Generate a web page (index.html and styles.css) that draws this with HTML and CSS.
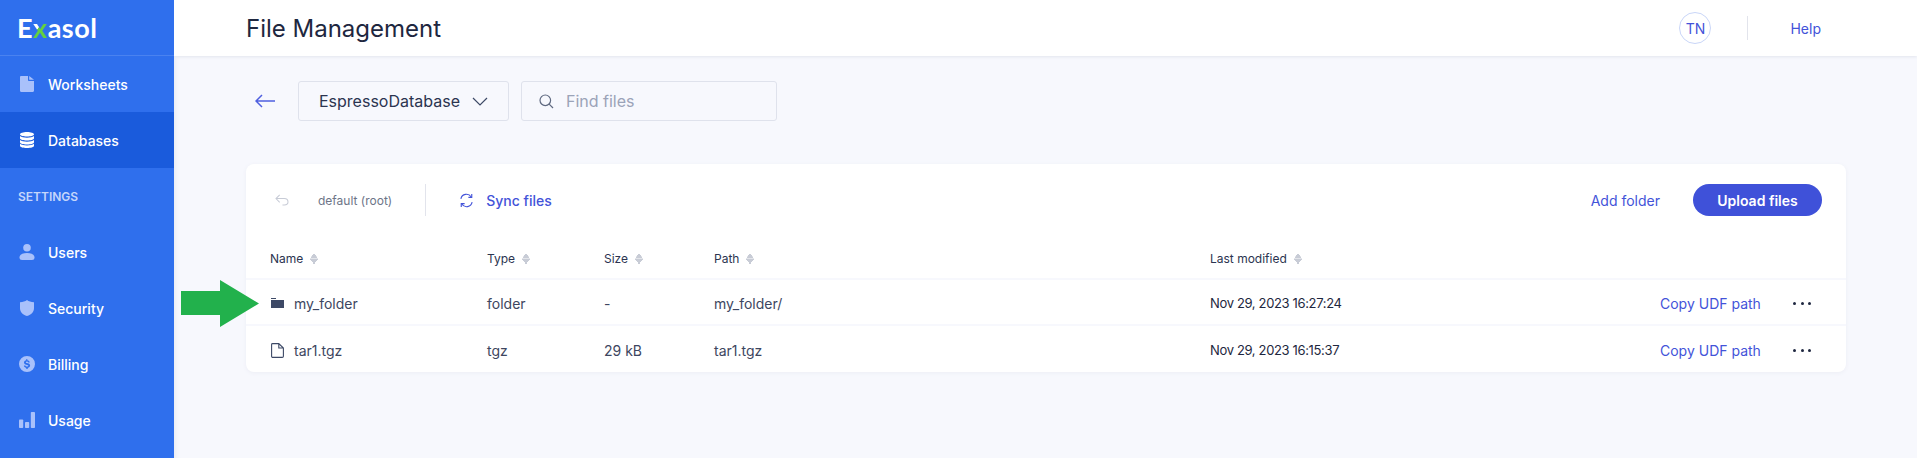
FILE: index.html
```html
<!DOCTYPE html>
<html lang="en">
<head>
  <meta charset="UTF-8" />
  <title>File Management</title>
  <link rel="stylesheet" href="styles.css">
</head>
<body>
  <aside class="sidebar">
    <div class="logo">E<span class="logo-x">x</span>asol</div>
    <a class="nav-item">
      <svg class="nav-icon" viewBox="0 0 14 16"><path d="M0 1.2C0 .5.5 0 1.2 0H8v4.2c0 .5.3.8.8.8H14v9.8c0 .7-.5 1.2-1.2 1.2H1.2C.5 16 0 15.500 0 14.800zM9.200 0 14 3.800H9.200z"/></svg>
      Worksheets
    </a>
    <a class="nav-item active">
      <svg class="nav-icon" viewBox="0 0 14 16"><path d="M7 0c3.900 0 7 1 7 2.300S10.900 4.600 7 4.600 0 3.600 0 2.300 3.100 0 7 0zM0 4c1.300 1 4 1.700 7 1.700S12.700 5 14 4v2.300c0 1.300-3.100 2.300-7 2.300S0 7.600 0 6.300zM0 8c1.300 1 4 1.700 7 1.700S12.700 9 14 8v2.300c0 1.300-3.100 2.300-7 2.300S0 11.600 0 10.300zM0 11.800c1.300 1 4 1.700 7 1.700s5.700-.7 7-1.700v1.900C14 15 10.900 16 7 16s-7-1-7-2.300z"/></svg>
      Databases
    </a>
    <div class="nav-label">SETTINGS</div>
    <a class="nav-item">
      <svg class="nav-icon" viewBox="0 0 15 16"><circle cx="7.500" cy="3.800" r="3.800"/><path d="M0 13.500C0 10.500 3 9 7.500 9s7.500 1.500 7.500 4.500c0 1.700-1 2.500-2.500 2.500h-10C1 16 0 15.200 0 13.500z"/></svg>
      Users
    </a>
    <a class="nav-item">
      <svg class="nav-icon" viewBox="0 0 14 16"><path d="M7 0c1.800 1.300 4 2.100 7 2.300v5.900c0 3.600-2.600 6.400-7 7.800-4.400-1.400-7-4.200-7-7.800V2.300C3 2.100 5.200 1.300 7 0z"/></svg>
      Security
    </a>
    <a class="nav-item">
      <svg class="nav-icon" viewBox="0 0 16 16"><path fill-rule="evenodd" d="M8 0a8 8 0 1 1 0 16A8 8 0 0 1 8 0zM7.300 3v1.200C5.900 4.500 5 5.300 5 6.500c0 1.300 1 1.900 2.300 2.200l.9.300c.8.200 1.100.4 1.100.8 0 .5-.5.800-1.300.8-.9 0-1.500-.4-1.600-1H4.900c.1 1.300 1 2.100 2.400 2.300V13h1.400v-1.100c1.500-.2 2.400-1.100 2.400-2.300 0-1.300-.9-1.900-2.300-2.300l-.9-.2c-.8-.2-1.100-.4-1.100-.8s.4-.7 1.100-.7c.8 0 1.300.3 1.400.9h1.500c-.1-1.200-1-2.100-2.500-2.300V3z"/></svg>
      Billing
    </a>
    <a class="nav-item">
      <svg class="nav-icon" viewBox="0 0 16 16"><rect x="0" y="7.500" width="4.200" height="8.500" rx=".8"/><rect x="6" y="10" width="4.200" height="6" rx=".8"/><rect x="11.800" y="0" width="4.200" height="16" rx=".8"/></svg>
      Usage
    </a>
  </aside>

  <div class="main">
    <header class="topbar">
      <h1>File Management</h1>
      <div class="user">
        <span class="avatar">TN</span>
        <span class="top-divider"></span>
        <a class="help">Help</a>
      </div>
    </header>

    <div class="filters">
      <svg class="back" viewBox="0 0 20 14"><path d="M20 7H1.500M7 1 1 7l6 6"/></svg>
      <div class="select">
        EspressoDatabase
        <svg class="chevron" viewBox="0 0 16 9"><path d="m1 1 7 7 7-7"/></svg>
      </div>
      <div class="search">
        <svg class="search-icon" viewBox="0 0 15 15"><circle cx="6.300" cy="6.300" r="5.300"/><path d="m10.200 10.200 3.800 3.800"/></svg>
        Find files
      </div>
    </div>

    <section class="card">
      <div class="card-tools">
        <svg class="undo" viewBox="0 0 15 13"><path d="M5 1 1 5l4 4M1 5h9c2.500 0 4 1.600 4 3.800S12.500 12 10 12H8"/></svg>
        <span class="crumb">default (root)</span>
        <span class="tool-divider"></span>
        <svg class="sync" viewBox="0 0 16 16"><path d="M2 6.200A6 6 0 0 1 13 4.200M14 9.800A6 6 0 0 1 3 11.800"/><path d="M13.600 1v3.700H10M2.400 15v-3.700H6"/></svg>
        <a class="link-strong">Sync files</a>
        <a class="add-folder">Add folder</a>
        <button class="upload">Upload files</button>
      </div>

      <div class="row head">
        <div>Name<i class="sort"></i></div>
        <div>Type<i class="sort"></i></div>
        <div>Size<i class="sort"></i></div>
        <div>Path<i class="sort"></i></div>
        <div>Last modified<i class="sort"></i></div>
      </div>
      <div class="row">
        <div class="name">
          <svg class="file-icon" viewBox="0 0 13 10"><path d="M0 0h5v1H0zM0 2h13v8H0z" fill="#3d4966"/></svg>
          my_folder
        </div>
        <div>folder</div>
        <div>-</div>
        <div>my_folder/</div>
        <div class="date">Nov 29, 2023 16:27:24</div>
        <a class="copy">Copy UDF path</a>
        <span class="dots"><b></b><b></b><b></b></span>
      </div>
      <div class="row">
        <div class="name">
          <svg class="file-icon" viewBox="0 0 13 15"><path d="M1.500.6h6.300L12.400 5v8.200c0 .7-.5 1.200-1.200 1.200H1.800c-.7 0-1.200-.5-1.200-1.200V1.500c0-.5.400-.9.900-.9zM7.800.6V5h4.600" fill="none" stroke="#3d4966" stroke-width="1.100"/></svg>
          tar1.tgz
        </div>
        <div>tgz</div>
        <div>29 kB</div>
        <div>tar1.tgz</div>
        <div class="date">Nov 29, 2023 16:15:37</div>
        <a class="copy">Copy UDF path</a>
        <span class="dots"><b></b><b></b><b></b></span>
      </div>
    </section>

    <svg class="marker" viewBox="0 0 78 47"><path d="M0 11h39V0l39 23.500L39 47V35H0z"/></svg>
  </div>
</body>
</html>
```

FILE: styles.css
```css
* {
  box-sizing: border-box;
}
body {
  margin: 0;
  height: 458px;
  overflow: hidden;
  display: flex;
  font-family: Inter, "Liberation Sans", sans-serif;
  background: #f7f8fd;
  color: #1e2740;
}
.sidebar {
  width: 174px;
  flex-shrink: 0;
  background: #2f6fed;
  color: white;
  position: relative;
  z-index: 2;
}
.logo {
  height: 56px;
  padding-left: 17px;
  font-family: Lato, sans-serif;
  font-size: 27px;
  font-weight: 700;
  letter-spacing: .5px;
  line-height: 55px;
  border-bottom: 1px solid #4a82f0;
}
.logo-x {
  color: transparent;
  background: linear-gradient(125deg, #fff 0 44%, #63d13e 46%);
  -webkit-background-clip: text;
  background-clip: text;
}
.nav-item {
  height: 56px;
  display: flex;
  align-items: center;
  padding-left: 19px;
  font-size: 14px;
  font-weight: 500;
}
.nav-item.active {
  background: #1a5bdc;
}
.nav-icon {
  width: 16px;
  height: 16px;
  margin-right: 13px;
  fill: #a9c1fb;
}
.active .nav-icon {
  fill: white;
}
.nav-label {
  height: 56px;
  padding: 21px 0 0 18px;
  font-size: 12px;
  font-weight: 600;
  color: #c5d6fb;
}
.main {
  flex: 1;
  position: relative;
  box-shadow: inset 6px 0 6px -6px #dfe2ec;
}
.topbar {
  height: 56px;
  background: white;
  box-shadow: 0 1px 3px #e3e5ee;
  display: flex;
  align-items: center;
  justify-content: space-between;
  padding: 0 96px 0 72px;
}
h1 {
  margin: 0;
  font-size: 24px;
  font-weight: 400;
}
.user {
  display: flex;
  align-items: center;
  font-size: 14px;
  color: #4353d9;
}
.avatar {
  width: 32px;
  height: 32px;
  border: 1px solid #c9d6f8;
  border-radius: 50%;
  display: flex;
  align-items: center;
  justify-content: center;
}
.top-divider {
  width: 1px;
  height: 24px;
  background: #e2e4ec;
  margin: 0 42px 0 36px;
}
.filters {
  display: flex;
  align-items: center;
  padding: 18px 0 0 81px;
  height: 72px;
}
.back {
  width: 20px;
  height: 14px;
  fill: none;
  stroke: #4f5fdf;
  stroke-width: 1.500;
  margin-right: 23px;
}
.select,
.search {
  height: 40px;
  border: 1px solid #dfe2ec;
  border-radius: 3px;
  display: flex;
  align-items: center;
  font-size: 16px;
}
.select {
  width: 211px;
  padding-left: 20px;
  margin-right: 12px;
  color: #2b3450;
}
.chevron {
  width: 16px;
  height: 9px;
  margin-left: 12px;
  fill: none;
  stroke: #3d4966;
  stroke-width: 1.200;
}
.search {
  width: 256px;
  padding-left: 17px;
  color: #9ba3b8;
}
.search-icon {
  width: 15px;
  height: 15px;
  margin-right: 12px;
  fill: none;
  stroke: #5f6980;
  stroke-width: 1.200;
}
.card {
  width: 1600px;
  height: 208px;
  margin: 36px 0 0 72px;
  background: white;
  border-radius: 8px;
  box-shadow: 0 1px 4px #eceef5;
}
.card-tools {
  height: 72px;
  padding: 0 24px 0 29px;
  display: flex;
  align-items: center;
  font-size: 14px;
  color: #4353d9;
}
.undo {
  width: 14px;
  height: 12px;
  fill: none;
  stroke: #c7cbd6;
  stroke-width: 1.100;
}
.crumb {
  margin-left: 29px;
  font-size: 12px;
  color: #6d7588;
}
.tool-divider {
  width: 1px;
  height: 32px;
  background: #e2e4ec;
  margin: 0 33px 0 33px;
}
.sync {
  width: 15px;
  height: 15px;
  fill: none;
  stroke: #4353d9;
  stroke-width: 1.200;
  margin-right: 12px;
}
.link-strong {
  font-weight: 500;
}
.add-folder {
  margin-left: auto;
}
.upload {
  width: 129px;
  height: 32px;
  margin-left: 33px;
  border: none;
  border-radius: 16px;
  background: #3f51d9;
  color: white;
  font-family: inherit;
  font-size: 14px;
  font-weight: 600;
}
.row {
  height: 46px;
  padding: 2px 0 0 24px;
  display: grid;
  grid-template-columns: 217px 117px 110px 496px 450px 133px 18px;
  align-items: center;
  font-size: 14px;
  color: #3d4660;
  border-bottom: 2px solid #f7f8fd;
}
.row:last-child {
  border-bottom: none;
}
.row.head {
  height: 44px;
  font-size: 12px;
  color: #2b3450;
}
.sort {
  display: inline-block;
  width: 8px;
  height: 12px;
  margin-left: 7px;
  vertical-align: -2px;
  background:
    linear-gradient(to bottom right, transparent 50%, #c8ccd6 51%) 0 0 / 4px 5.5px no-repeat,
    linear-gradient(to bottom left, transparent 50%, #c8ccd6 51%) 4px 0 / 4px 5.5px no-repeat,
    linear-gradient(to top right, transparent 50%, #c8ccd6 51%) 0 6.5px / 4px 5.5px no-repeat,
    linear-gradient(to top left, transparent 50%, #c8ccd6 51%) 4px 6.5px / 4px 5.5px no-repeat;
}
.name {
  display: flex;
  align-items: center;
}
.file-icon {
  width: 13px;
  margin-right: 10px;
  margin-left: 1px;
}
.date {
  font-size: 13px;
  letter-spacing: -.35px;
  color: #1e2740;
}
.copy {
  color: #4353d9;
}
.dots {
  display: flex;
  justify-content: space-between;
}
.dots b {
  width: 3px;
  height: 3px;
  border-radius: 50%;
  background: #1e2740;
}
.marker {
  position: absolute;
  left: 7px;
  top: 280px;
  width: 78px;
  height: 47px;
  fill: #22b14c;
}
```
